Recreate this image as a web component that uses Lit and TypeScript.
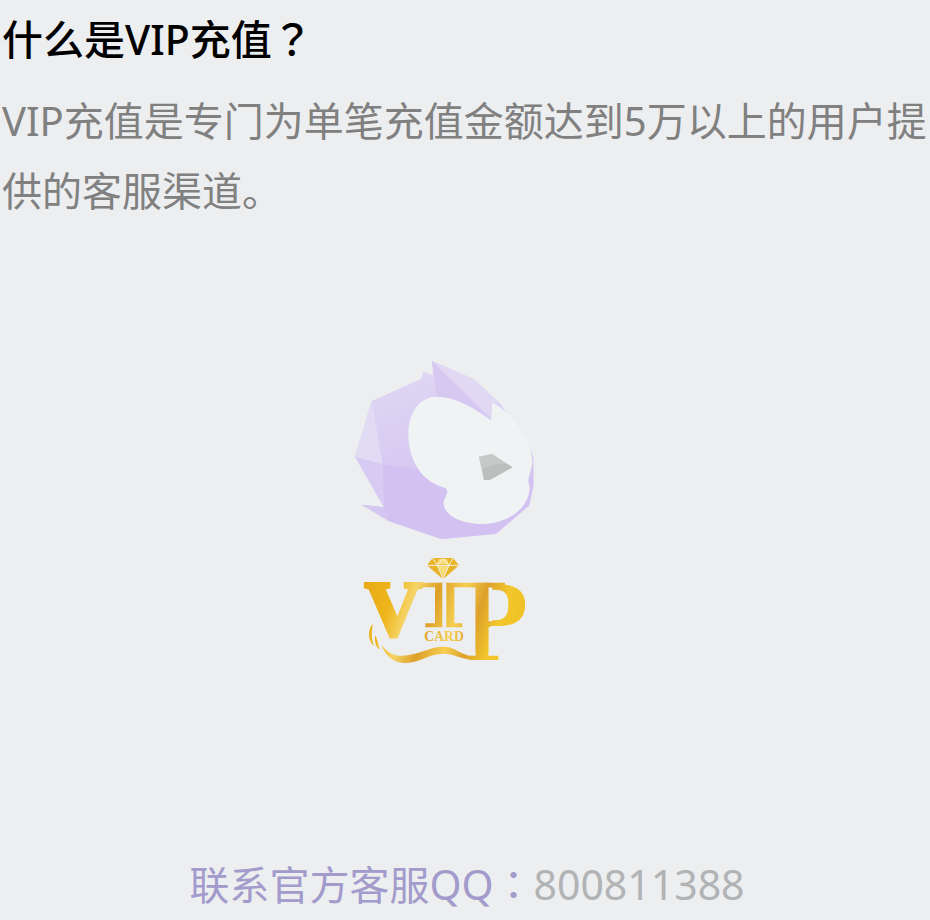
import { LitElement, html, css } from "lit";
import { customElement } from "lit/decorators.js";

@customElement("penguin-mark")
class PenguinMark extends LitElement {
  static styles = css`
    :host { display: block; }
    svg { display: block; width: 210px; height: 200px; }
  `;
  render() {
    return html`<svg viewBox="0 0 630 600" aria-hidden="true">
      <defs>
        <linearGradient id="hood" x1="0" y1="0" x2="0.35" y2="1">
          <stop offset="0" stop-color="#e0dbf3" />
          <stop offset="0.55" stop-color="#d8cbf2" />
          <stop offset="1" stop-color="#d2c1f1" />
        </linearGradient>
      </defs>
      <path fill="url(#hood)" d="M95 153 243 87 250 66 279 76 276 32 402 88 482 163 572 300 580 320 581 405 568 466 468 551 304 567 146 513 65 464 132 472 45 320Z" />
      <path fill="#d3c2f1" d="M128 342 236 358 330 420 345 510 568 466 468 551 304 567 146 513 132 472Z" />
      <path fill="#d8cbf3" d="M45 320 128 342 132 472Z" />
      <path fill="#e1dcf3" d="M95 153 45 320 128 342Z" />
      <path fill="#d7c8f2" d="M276 32 290 140 350 155 453 210Z" />
      <path fill="#e1d9f4" d="M276 32 402 88 482 163 457 156 453 203Z" />
      <path fill="#d5c6f2" d="M65 464 132 472 146 513Z" />
      <path fill="#f0f3f4" d="M457 156C510 185 577 270 577 335C574 370 562 380 566 400C580 430 545 522 420 522C337 518 305 480 312 452C316 440 324 432 321 420C316 411 303 412 285 402C230 374 204 310 205 250C206 190 237 140 290 140C350 140 403 176 453 211Z" />
      <path fill="#c7c9c9" d="M416 320 456 311 518 352 432 390Z" />
      <path fill="#bcbebe" d="M427 358Q455 342 499 341L518 352 450 390 432 390Z" />
    </svg>`;
  }
}

@customElement("vip-card-mark")
class VipCardMark extends LitElement {
  static styles = css`
    :host { display: block; }
    svg { display: block; width: 180px; height: 120px; overflow: visible; }
    text { font-family: "Liberation Serif", serif; font-weight: 700; }
    .v {
      font-size: 236px;
      stroke: url(#gold);
      stroke-width: 12px;
    }
    .i { font-size: 203px; }
    .p { font-size: 320px; }
    .card { font-size: 41px; }
    .gap { fill: #eceef0; }
  `;
  render() {
    return html`<svg viewBox="0 0 540 360" role="img" aria-label="VIP CARD">
      <defs>
        <linearGradient id="gold" gradientUnits="userSpaceOnUse" x1="30" y1="90" x2="510" y2="250">
          <stop offset="0" stop-color="#e8aa16" />
          <stop offset="0.18" stop-color="#eeb51b" />
          <stop offset="0.3" stop-color="#f5d568" />
          <stop offset="0.43" stop-color="#dda027" />
          <stop offset="0.58" stop-color="#f5cf50" />
          <stop offset="0.7" stop-color="#dda02a" />
          <stop offset="0.83" stop-color="#f2c72d" />
          <stop offset="1" stop-color="#efbf20" />
        </linearGradient>
      </defs>
      <text class="p" fill="url(#gold)" x="324" y="309">P</text>
      <path class="gap" d="M316 112H362V317H316ZM400 112H412V214H400ZM400 232H450V317H400Z" />
      <g fill="url(#gold)">
        <text class="v" x="30" y="256">V</text>
        <path d="M170 98H450V112H170Z" />
        <text class="i" x="229" y="232">I</text>
        <path d="M240 104H298V220H322V232H211V220H240Z" />
        <path d="M362 98H400V317H430V330H345V317H362Z" />
        <text class="card" x="208" y="272">CARD</text>
        <path d="M53 222C34 245 43 278 57 287C46 260 52 245 53 222ZM60 255C58 280 65 294 74 298C68 281 68 267 60 255ZM80 285C102 315 130 322 162 315C213 305 230 289 270 290C305 292 320 320 362 318V330C320 330 298 310 265 311C220 311 195 339 145 339C108 337 87 309 80 285Z" />
      </g>
      <path class="gap" d="M262 98H274V232H262Z" />
      <path fill="#e9b326" d="M233 24H294L312 46 264 88 216 46Z" />
      <path fill="#f8dc7c" d="M248 47H282L264 82ZM252 27H275L282 43H245Z" />
      <path fill="none" stroke="#f4f2e4" stroke-width="3" d="M216 46H312M233 24 247 46 264 26 282 46 294 24M247 46 264 87 282 46" />
    </svg>`;
  }
}

@customElement("app-root")
class AppRoot extends LitElement {
  static styles = css`
    :host {
      display: flex;
      flex-direction: column;
      min-height: 100vh;
      box-sizing: border-box;
      padding: 0 0 0 2px;
      background: #eceef0;
      font-family: "Noto Sans", "Noto Sans CJK SC", sans-serif;
      font-size: 40px;
      line-height: 70px;
      font-weight: 400;
    }
    h1 {
      margin: 0;
      font-size: 41px;
      line-height: 74px;
      font-weight: 500;
      color: #000;
    }
    .mid { font-family: "Noto Sans CJK TC", sans-serif; }
    .intro { margin: 10px 0 0; color: #808080; line-break: anywhere; }
    .art {
      flex: 1;
      display: flex;
      flex-direction: column;
      align-items: center;
      padding: 124px 42px 0 0;
    }
    .contact { margin: 0; padding-left: 2px; text-align: center; color: #a29bcb; }
    .latin { font-size: 41px; }
    .number { color: #b1b3b4; }
  `;
  render() {
    return html`
      <h1 lang="zh-CN">什么是VIP充值<span class="mid" lang="zh-TW">？</span></h1>
      <p class="intro" lang="zh-CN">VIP充值是专门为单笔充值金额达到5万以上的用户提供的客服渠道。</p>
      <div class="art">
        <penguin-mark></penguin-mark>
        <vip-card-mark></vip-card-mark>
      </div>
      <p class="contact" lang="zh-CN">联系官方客服<span class="latin">QQ</span><span class="mid" lang="zh-TW">：</span><span class="latin number">800811388</span></p>
    `;
  }
}
